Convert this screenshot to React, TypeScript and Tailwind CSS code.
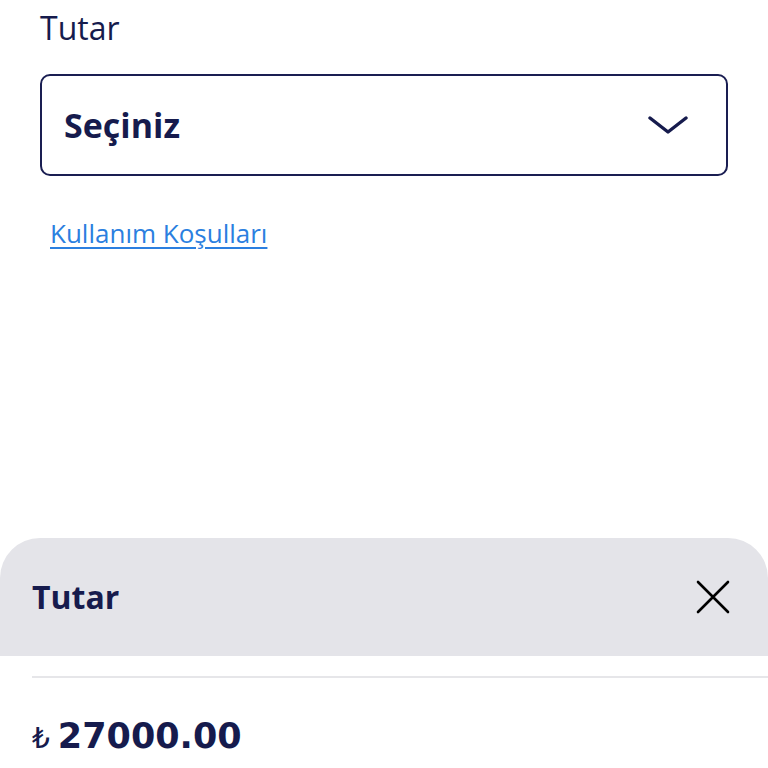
const navy = "text-[#161b4d]";

export default function App() {
  return (
    <div className="flex h-[768px] w-[768px] flex-col overflow-hidden bg-white font-['Open_Sans',sans-serif]">
      <div className="px-[40px] pt-[6px]">
        <p className={`text-[32px] leading-[44px] ${navy}`}>Tutar</p>
        <button className="mt-[24px] flex h-[102px] w-[688px] items-center justify-between rounded-[10px] border-2 border-[#1a1e52] pl-[22px] pr-[38px]">
          <span className={`text-[34px] font-bold leading-none ${navy}`}>Seçiniz</span>
          <svg width="40" height="20" viewBox="0 0 40 20" fill="none" aria-hidden="true">
            <path d="M2 3L20 17L38 3" stroke="#161b4d" strokeWidth="3.4" strokeLinecap="round" strokeLinejoin="round" />
          </svg>
        </button>
        <a href="#" className="mt-[40px] ml-[10px] inline-block text-[26px] leading-[34px] text-[#2b7fe0] underline decoration-[2px] underline-offset-[4px]">
          Kullanım Koşulları
        </a>
      </div>

      <div className="mt-auto pb-[14px]">
        <div className="flex h-[118px] items-center justify-between rounded-t-[40px] bg-[#e4e4e9] pl-[32px] pr-[38px]">
          <h2 className={`text-[32px] font-bold leading-none ${navy}`}>Tutar</h2>
          <svg width="34" height="34" viewBox="0 0 34 34" fill="none" aria-hidden="true">
            <path d="M2 2L32 32M32 2L2 32" stroke="#000" strokeWidth="2.6" strokeLinecap="round" />
          </svg>
        </div>
        <div className="bg-white pl-[32px] pt-[20px]">
          <div className="h-[2px] bg-[#e6e6e9]" />
          <p className={`mt-[41px] flex items-baseline gap-[8px] font-['DejaVu_Sans',sans-serif] ${navy}`}>
            <span className="text-[28px] leading-none">₺</span>
            <span className="text-[35px] font-bold leading-none">27000.00</span>
          </p>
        </div>
      </div>
    </div>
  );
}
